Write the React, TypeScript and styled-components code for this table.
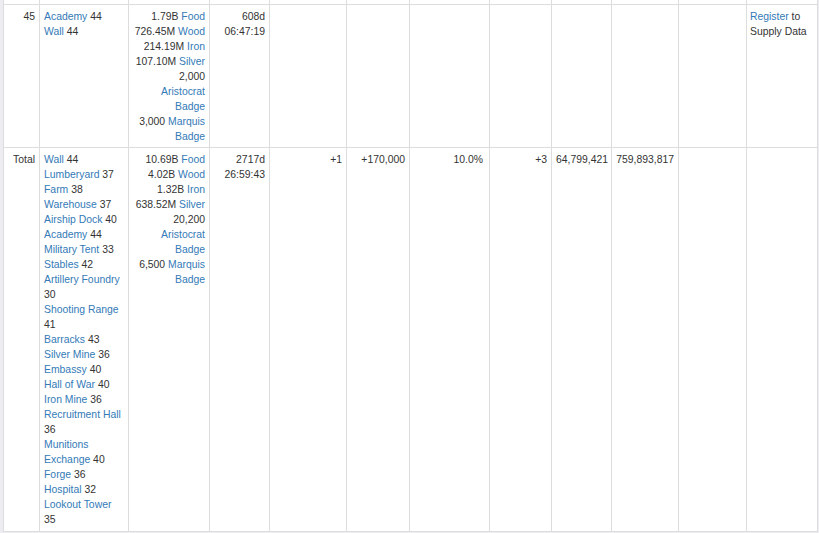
import React from 'react';
import styled, { createGlobalStyle } from 'styled-components';

const GlobalStyle = createGlobalStyle`
  html, body {
    margin: 0;
    padding: 0;
    background: #ededf1;
  }
  body {
    font-family: "Liberation Sans", Arial, Helvetica, sans-serif;
    font-size: 10.4px;
    color: #333;
  }
`;

const Wrapper = styled.div`
  padding-left: 3px;
`;

const Table = styled.table`
  border-collapse: collapse;
  table-layout: fixed;
  width: 815px;
  background: white;
`;

const Cell = styled.td<{ $align?: string; $padRight?: number; $padBottom?: number; $padLeft?: number }>`
  border: 1px solid #ddd;
  padding: 4px ${(p) => p.$padRight ?? 4}px ${(p) => p.$padBottom ?? 4}px
    ${(p) => p.$padLeft ?? 4}px;
  line-height: 15px;
  vertical-align: top;
  text-align: ${(p) => p.$align || 'right'};
`;

const SpacerCell = styled.td`
  border-left: 1px solid #ddd;
  border-right: 1px solid #ddd;
  border-top: none;
  height: 4px;
  padding: 0;
`;

const Link = styled.a`
  color: #337ab7;
  text-decoration: none;
  cursor: pointer;
`;

const Item = styled.div`
  display: block;
`;

const widths = [36, 89, 81, 60, 77, 63, 80, 62, 60, 67, 68, 71];

type Row = {
  rank: string;
  buildings: [string, number][];
  resources: [string, string][];
  time: [string, string];
  stats: string[];
};

const rows: Row[] = [
  {
    rank: '45',
    buildings: [
      ['Academy', 44],
      ['Wall', 44],
    ],
    resources: [
      ['1.79B', 'Food'],
      ['726.45M', 'Wood'],
      ['214.19M', 'Iron'],
      ['107.10M', 'Silver'],
      ['2,000', 'Aristocrat Badge'],
      ['3,000', 'Marquis Badge'],
    ],
    time: ['608d', '06:47:19'],
    stats: ['', '', '', '', '', '', ''],
  },
  {
    rank: 'Total',
    buildings: [
      ['Wall', 44],
      ['Lumberyard', 37],
      ['Farm', 38],
      ['Warehouse', 37],
      ['Airship Dock', 40],
      ['Academy', 44],
      ['Military Tent', 33],
      ['Stables', 42],
      ['Artillery Foundry', 30],
      ['Shooting Range', 41],
      ['Barracks', 43],
      ['Silver Mine', 36],
      ['Embassy', 40],
      ['Hall of War', 40],
      ['Iron Mine', 36],
      ['Recruitment Hall', 36],
      ['Munitions Exchange', 40],
      ['Forge', 36],
      ['Hospital', 32],
      ['Lookout Tower', 35],
    ],
    resources: [
      ['10.69B', 'Food'],
      ['4.02B', 'Wood'],
      ['1.32B', 'Iron'],
      ['638.52M', 'Silver'],
      ['20,200', 'Aristocrat Badge'],
      ['6,500', 'Marquis Badge'],
    ],
    time: ['2717d', '26:59:43'],
    stats: ['+1', '+170,000', '10.0%', '+3', '64,799,421', '759,893,817', ''],
  },
];

const App = () => {
  return (
    <Wrapper>
      <GlobalStyle />
      <Table>
        <colgroup>
          {widths.map((w, i) => (
            <col key={i} style={{ width: w }} />
          ))}
        </colgroup>
        <tbody>
          <tr>
            {widths.map((_, i) => (
              <SpacerCell key={i} />
            ))}
          </tr>
          {rows.map((row, ri) => {
            const pb = ri === 0 ? 3 : 4;
            return (
              <tr key={ri}>
                <Cell $padBottom={pb}>{row.rank}</Cell>
                <Cell $align="left" $padBottom={pb}>
                  {row.buildings.map(([name, lvl]) => (
                    <Item key={name}>
                      <Link>{name}</Link> {lvl}
                    </Item>
                  ))}
                </Cell>
                <Cell $padBottom={pb}>
                  {row.resources.map(([amount, name]) => (
                    <Item key={name}>
                      {amount} <Link>{name}</Link>
                    </Item>
                  ))}
                </Cell>
                <Cell $padBottom={pb}>
                  {row.time[0]}
                  <br />
                  {row.time[1]}
                </Cell>
                {row.stats.map((s, si) => (
                  <Cell key={si} $padBottom={pb} $padRight={si === 2 ? 6 : 4}>
                    {s}
                  </Cell>
                ))}
                <Cell $align="left" $padBottom={pb} $padLeft={3}>
                  {ri === 0 && (
                    <>
                      <Link>Register</Link> to Supply Data
                    </>
                  )}
                </Cell>
              </tr>
            );
          })}
        </tbody>
      </Table>
    </Wrapper>
  );
};

export default App;
